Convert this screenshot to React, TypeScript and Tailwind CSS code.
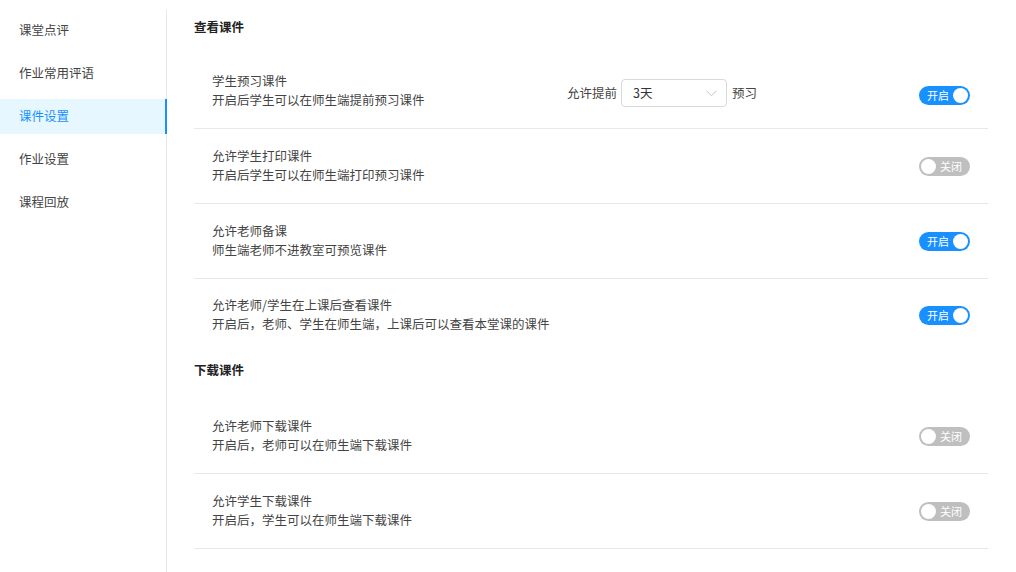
import React from "react";

interface SettingRow {
  title: string;
  desc: string;
  on: boolean;
  advance?: boolean;
  last?: boolean;
}

const menu = ["课堂点评", "作业常用评语", "课件设置", "作业设置", "课程回放"];

const viewRows: SettingRow[] = [
  { title: "学生预习课件", desc: "开启后学生可以在师生端提前预习课件", on: true, advance: true },
  { title: "允许学生打印课件", desc: "开启后学生可以在师生端打印预习课件", on: false },
  { title: "允许老师备课", desc: "师生端老师不进教室可预览课件", on: true },
  { title: "允许老师/学生在上课后查看课件", desc: "开启后，老师、学生在师生端，上课后可以查看本堂课的课件", on: true, last: true },
];

const downloadRows: SettingRow[] = [
  { title: "允许老师下载课件", desc: "开启后，老师可以在师生端下载课件", on: false },
  { title: "允许学生下载课件", desc: "开启后，学生可以在师生端下载课件", on: false },
];

function Toggle({ on }: { on: boolean }) {
  if (on) {
    return (
      <div className="relative w-[51px] h-[19px] rounded-full bg-[#1890ff] shrink-0">
        <span className="absolute left-[8px] top-0 text-[11px] leading-[19px] text-white">开启</span>
        <span className="absolute right-[2px] top-[2px] w-[15px] h-[15px] rounded-full bg-white" />
      </div>
    );
  }
  return (
    <div className="relative w-[51px] h-[19px] rounded-full bg-[#bfbfbf] shrink-0">
      <span className="absolute left-[2px] top-[2px] w-[15px] h-[15px] rounded-full bg-white" />
      <span className="absolute right-[8px] top-0 text-[11px] leading-[19px] text-white">关闭</span>
    </div>
  );
}

function Row({ row }: { row: SettingRow }) {
  return (
    <div
      className={
        "flex items-center pl-[18px] pr-[18px] " +
        (row.last ? "h-[72px]" : "h-[75px] border-b border-[#e8e8e8]")
      }
    >
      <div className="flex-1 pb-[3px] text-[12.5px] leading-[19px] text-[#444]">
        <div>{row.title}</div>
        <div>{row.desc}</div>
      </div>
      {row.advance && (
        <div className="flex items-center mr-[162px] mt-[4px] text-[12.5px] text-[#444]">
          <span>允许提前</span>
          <div className="flex items-center justify-between w-[106px] h-[28px] ml-[4px] mr-[5px] pl-[11px] pr-[9px] border border-[#d9d9d9] rounded-[4px] bg-white">
            <span className="text-[#333]">3天</span>
            <svg width="11" height="7" viewBox="0 0 11 7" fill="none">
              <path d="M0.5 0.8 L5.5 5.8 L10.5 0.8" stroke="#c4c4c4" strokeWidth="1" />
            </svg>
          </div>
          <span>预习</span>
        </div>
      )}
      <div className={row.advance ? "mt-[9px]" : "mt-[1px]"}>
        <Toggle on={row.on} />
      </div>
    </div>
  );
}

export default function App() {
  return (
    <div
      className="flex w-[1016px] h-[572px] bg-white overflow-hidden"
      style={{ fontFamily: '"PingFang SC", "Noto Sans CJK SC", "Noto Sans", sans-serif' }}
    >
      {/* 左侧菜单 */}
      <div className="w-[167px] shrink-0 mt-[10px] pt-[3px] border-r border-[#e8e8e8]">
        {menu.map((m) => {
          const active = m === "课件设置";
          return (
            <div
              key={m}
              className={
                "h-[35px] mb-[8px] pl-[19px] flex items-center text-[12.5px] " +
                (active
                  ? "bg-[#e6f7ff] text-[#1890ff] border-r-2 border-[#1890ff] -mr-px"
                  : "text-[#444]")
              }
            >
              {m}
            </div>
          );
        })}
      </div>

      {/* 右侧设置 */}
      <div className="flex-1 pl-[27px] pr-[28px]">
        <div className="mt-[17px] mb-[17px] h-[20px] leading-[20px] text-[12.5px] font-bold text-[#222]">查看课件</div>
        {viewRows.map((r) => (
          <Row key={r.title} row={r} />
        ))}
        <div className="mt-[9px] mb-[19px] h-[20px] leading-[20px] text-[12.5px] font-bold text-[#222]">下载课件</div>
        {downloadRows.map((r) => (
          <Row key={r.title} row={r} />
        ))}
      </div>
    </div>
  );
}
